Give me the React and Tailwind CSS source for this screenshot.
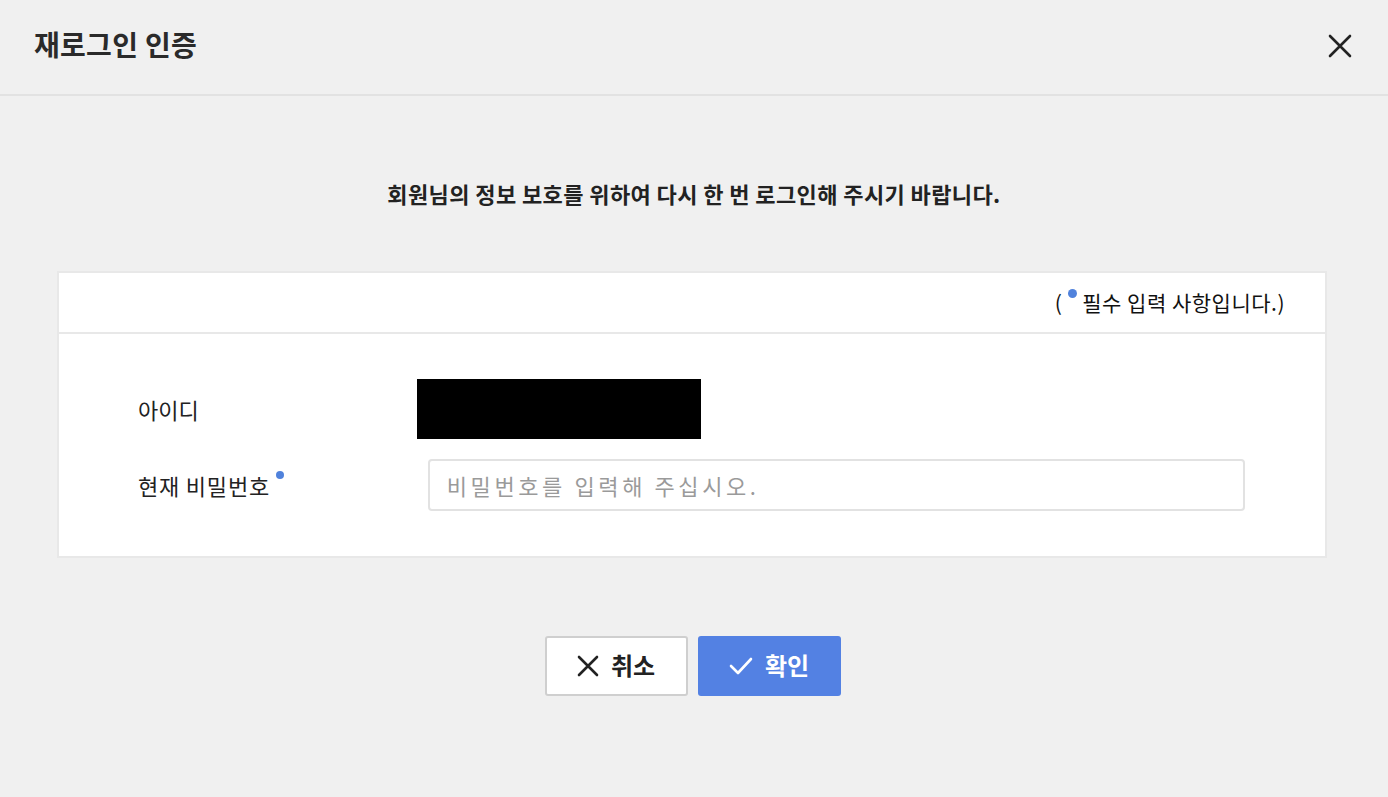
import React from "react";

export default function App() {
  return (
    <div
      className="w-[1388px] h-[797px] bg-[#f0f0f0] flex flex-col text-[#222]"
      style={{ fontFamily: '"Noto Sans CJK KR", "Noto Sans", sans-serif' }}
    >
      <div className="h-[96px] shrink-0 flex items-center justify-between pl-[34px] pr-[36px] border-b-2 border-[#e2e2e2]">
        <h1 className="text-[28px] font-bold text-[#2a2a2a] tracking-[0.3px] mt-[-7px]">재로그인 인증</h1>
        <svg width="24" height="24" viewBox="0 0 24 24" className="mt-[-2px]">
          <path d="M2 2 L22 22 M22 2 L2 22" stroke="#222" strokeWidth="2.6" strokeLinecap="round" />
        </svg>
      </div>
      <div className="flex flex-col items-center pt-[80px]">
        <p className="text-[22px] font-bold text-[#222] tracking-[0.4px] leading-[34px]">
          회원님의 정보 보호를 위하여 다시 한 번 로그인해 주시기 바랍니다.
        </p>
      </div>
      <div className="ml-[57px] mr-[61px] mt-[61px] bg-white border-2 border-[#e8e8e8]">
        <div className="h-[61px] border-b-2 border-[#e8e8e8] flex items-center justify-end pr-[40px]">
          <span className="text-[21px] text-[#111] tracking-[0.5px] flex items-center">
            (
            <span className="relative inline-block w-[16px] h-[20px] ml-[1px] mr-[3px]">
              <span className="absolute left-[5px] top-[-4px] w-[9px] h-[9px] rounded-full bg-[#5082dc]" />
            </span>
            필수 입력 사항입니다.)
          </span>
        </div>
        <div className="pl-[79px] pr-[80px] pt-[45px] pb-[45px] flex flex-col gap-[20px]">
          <div className="flex items-center h-[60px]">
            <div className="w-[279px] text-[22px] text-[#222]">아이디</div>
            <div className="w-[284px] h-[60px] bg-black" />
          </div>
          <div className="flex items-center h-[52px]">
            <div className="w-[290px] text-[22px] text-[#222] tracking-[0.8px] flex items-start">
              현재 비밀번호
              <span className="inline-block w-[8px] h-[8px] rounded-full bg-[#5082dc] ml-[6px] mt-[2px]" />
            </div>
            <input
              type="password"
              placeholder="비밀번호를 입력해 주십시오."
              className="w-[818px] h-[52px] border-2 border-[#e2e2e2] rounded-[4px] px-[17px] text-[22px] tracking-[3.6px] placeholder:text-[#9a9a9a] outline-none"
            />
          </div>
        </div>
      </div>
      <div className="flex justify-center gap-[10px] mt-[78px] mr-[3px]">
        <button className="w-[143px] h-[60px] bg-white border-2 border-[#cfcfcf] rounded-[3px] flex items-center justify-center gap-[12px] text-[24px] font-bold text-[#222]">
          <svg width="22" height="22" viewBox="0 0 22 22">
            <path d="M2 2 L20 20 M20 2 L2 20" stroke="#222" strokeWidth="2.6" strokeLinecap="round" />
          </svg>
          <span className="mt-[-3px]">취소</span>
        </button>
        <button className="w-[143px] h-[60px] bg-[#5381e3] rounded-[3px] flex items-center justify-center gap-[12px] text-[24px] font-bold text-white">
          <svg width="24" height="18" viewBox="0 0 24 18">
            <path d="M2 9 L9 16 L22 2" stroke="#fff" strokeWidth="2.6" fill="none" strokeLinecap="round" strokeLinejoin="round" />
          </svg>
          <span className="mt-[-3px]">확인</span>
        </button>
      </div>
    </div>
  );
}
